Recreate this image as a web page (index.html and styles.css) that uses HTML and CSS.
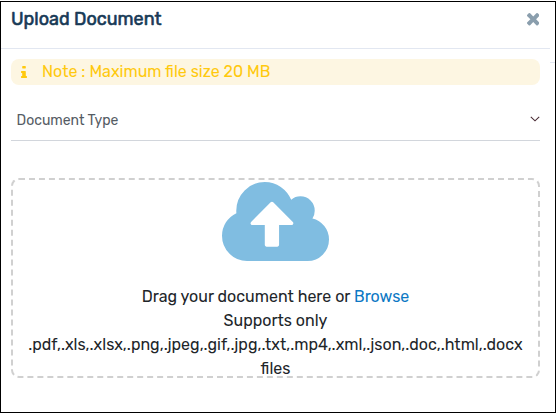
FILE: index.html
```html
<!DOCTYPE html>
<html lang="en">
<head>
<meta charset="utf-8">
<title>Upload Document</title>
<link rel="stylesheet" href="styles.css">
</head>
<body>
<main class="dialog">
  <header class="header">
    <h1 class="title">Upload Document</h1>
    <svg class="close" viewBox="302 366 1188 1188"><path d="M1490 1322q0 40-28 68l-136 136q-28 28-68 28t-68-28l-294-294-294 294q-28 28-68 28t-68-28l-136-136q-28-28-28-68t28-68l294-294-294-294q-28-28-28-68t28-68l136-136q28-28 68-28t68 28l294 294 294-294q28-28 68-28t68 28l136 136q28 28 28 68t-28 68l-294 294 294 294q28 28 28 68z"/></svg>
  </header>
  <div class="note">
    <svg class="info" viewBox="0 0 640 1536" preserveAspectRatio="none"><path d="M640 1344v128q0 26-19 45t-45 19H64q-26 0-45-19t-19-45v-128q0-26 19-45t45-19h64V896H64q-26 0-45-19T0 832V704q0-26 19-45t45-19h384q26 0 45 19t19 45v576h64q26 0 45 19t19 45zM512 64v192q0 26-19 45t-45 19H192q-26 0-45-19t-19-45V64q0-26 19-45t45-19h256q26 0 45 19t19 45z"/></svg>
    <span class="note-text">Note : Maximum file size 20 MB</span>
  </div>
  <div class="select">
    <span class="select-label">Document Type</span>
    <svg class="chevron" viewBox="0 0 10 6"><path d="M.8.8 5 4.8 9.2.8"/></svg>
  </div>
  <section class="dropzone">
    <svg class="cloud" viewBox="0 128 1920 1408" preserveAspectRatio="none"><path d="M1920 1152q0 159-112.500 271.500T1536 1536H448q-185 0-316.500-131.500T0 1088q0-132 71-241.500T258 683q-2-28-2-43 0-212 150-362t362-150q158 0 286.500 88T1242 446q70-62 166-62 106 0 181 75t75 181q0 75-41 138 129 30 213 134.500t84 239.500z"/><path class="arrow" d="M1280 864q0-14-9-23L919 489q-9-9-23-9t-23 9L522 840q-10 12-10 24 0 14 9 23t23 9h224v352q0 13 9.500 22.500t22.500 9.500h192q13 0 22.500-9.500t9.500-22.500V896h224q13 0 22.500-9.500t9.500-22.500z"/></svg>
    <div class="line drag">Drag your document here or <a class="browse">Browse</a></div>
    <div class="line supports">Supports only</div>
    <div class="line types">.pdf,.xls,.xlsx,.png,.jpeg,.gif,.jpg,.txt,.mp4,.xml,.json,.doc,.html,.docx</div>
    <div class="line files">files</div>
  </section>
  <span class="edge-rule"></span>
</main>
</body>
</html>
```
FILE: styles.css
```css
* { box-sizing: border-box; }
body { margin: 0; background: #fff; font-family: Rubik, Roboto, sans-serif; font-size: 16px; font-weight: 400; color: #212529; }
.dialog { position: relative; width: 556px; height: 412px; margin-top: 1px; border: 1px solid #000; overflow: hidden; }
.header { display: flex; justify-content: space-between; align-items: flex-start; width: 549px; height: 47px; padding: 5px 11px 0 10px; border-bottom: 1px solid #e2e7f1; }
.title { margin: 0; font-size: 18px; line-height: 24px; font-weight: 400; -webkit-text-stroke: 0.6px currentColor; color: #173a56; white-space: nowrap; }
.close { width: 12.5px; height: 12.5px; margin-top: 6px; fill: #8a9ead; }
.note { display: flex; align-items: center; width: 529px; height: 26px; margin: 10px 0 0 10px; padding-left: 10px; border-radius: 8px; background: #fdf6e2; color: #ffc90e; }
.info { width: 6px; height: 12px; fill: currentColor; }
.note-text { margin-left: 15px; line-height: 24px; white-space: nowrap; }
.select { display: flex; justify-content: space-between; align-items: center; width: 529px; height: 42px; margin: 14px 0 0 10px; padding-left: 5.5px; border-bottom: 1px solid #d2d6dc; }
.select-label { margin-top: 2px; font-size: 14px; color: #555c64; }
.chevron { width: 10px; height: 6px; margin-bottom: 2px; fill: none; stroke: #4a2c35; stroke-width: 1.1; }
.dropzone { display: flex; flex-direction: column; align-items: center; width: 529px; height: 200px; margin: 37px 0 0 10px; border: 2px dashed #d0d0d0; border-radius: 8px; }
.cloud { flex: none; width: 107px; height: 79px; margin: 2px 0 24px; fill: #80bde1; }
.arrow { fill: #fff; }
.line { line-height: 24px; white-space: nowrap; }
.browse { color: #0c78c4; }
.edge-rule { position: absolute; top: 60px; right: -1px; width: 6px; height: 1px; background: #e2e7f1; }
```
